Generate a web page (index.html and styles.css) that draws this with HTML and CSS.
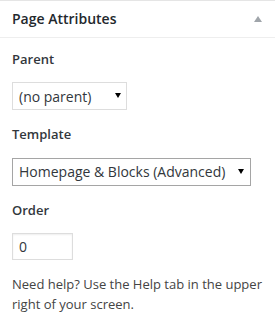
FILE: index.html
```html
<!DOCTYPE html>
<html lang="en">
<head>
    <meta charset="UTF-8">
    <title>Page Attributes</title>
    <link rel="stylesheet" href="styles.css">
</head>
<body>
    <div class="postbox">
        <h2 class="hndle">
            <span>Page Attributes</span>
            <svg class="toggle" width="8" height="6" viewBox="0 0 8 6"><polygon points="4,0 8,6 0,6" fill="#a0a5aa"/></svg>
        </h2>

        <div class="inside">
            <p class="label">Parent</p>
            <div class="select-wrap parent">
                <select>
                    <option>(no parent)</option>
                </select>
            </div>

            <p class="label">Template</p>
            <div class="select-wrap template">
                <select>
                    <option>Homepage &amp; Blocks (Advanced)</option>
                </select>
            </div>

            <p class="label">Order</p>
            <input class="order" type="text" value="0">

            <p class="help">Need help? Use the Help tab in the upper right of your screen.</p>
        </div>
    </div>
</body>
</html>
```

FILE: styles.css
```css
* {
    margin: 0;
    padding: 0;
    box-sizing: border-box;
}

body {
    font-family: 'Open Sans', 'Liberation Sans', sans-serif;
    font-size: 13px;
    line-height: 1.5;
    color: #444;
    background: #fff;
}

.postbox {
    border-top: 1px solid #e5e5e5;
}

.hndle {
    display: flex;
    align-items: center;
    justify-content: space-between;
    font-size: 14px;
    font-weight: 600;
    line-height: 1.4;
    color: #23282d;
    padding: 8px 13px 8px 12px;
    border-bottom: 1px solid #eee;
}

.inside {
    padding: 12px 12px 12px;
}

.label {
    font-weight: 600;
    color: #32373c;
    margin: 0 0 13px;
}

.label + .select-wrap,
.label + .order {
    margin-top: 0;
}

.select-wrap {
    position: relative;
    margin-bottom: 15px;
}

.select-wrap select {
    appearance: none;
    -webkit-appearance: none;
    font-family: inherit;
    font-size: 14px;
    color: #32373c;
    background: #fff;
    border: 1px solid #ddd;
    border-radius: 0;
    height: 28px;
    padding: 0 20px 0 6px;
    outline: none;
}

.select-wrap::after {
    content: "";
    position: absolute;
    top: 11px;
    border-left: 3px solid transparent;
    border-right: 3px solid transparent;
    border-top: 5px solid #000;
}

.parent select {
    width: 115px;
}

.parent::after {
    left: 103px;
}

.template select {
    width: 239px;
    border-color: #a5a5a5;
}

.template::after {
    left: 226px;
}

.order {
    display: block;
    width: 61px;
    height: 27px;
    font-family: inherit;
    font-size: 14px;
    color: #32373c;
    padding: 0 6px;
    border: 1px solid #ddd;
    box-shadow: inset 0 1px 2px rgba(0, 0, 0, 0.07);
    outline: none;
    margin-bottom: 14px;
}

.help {
    color: #444;
    line-height: 1.55;
}
```
